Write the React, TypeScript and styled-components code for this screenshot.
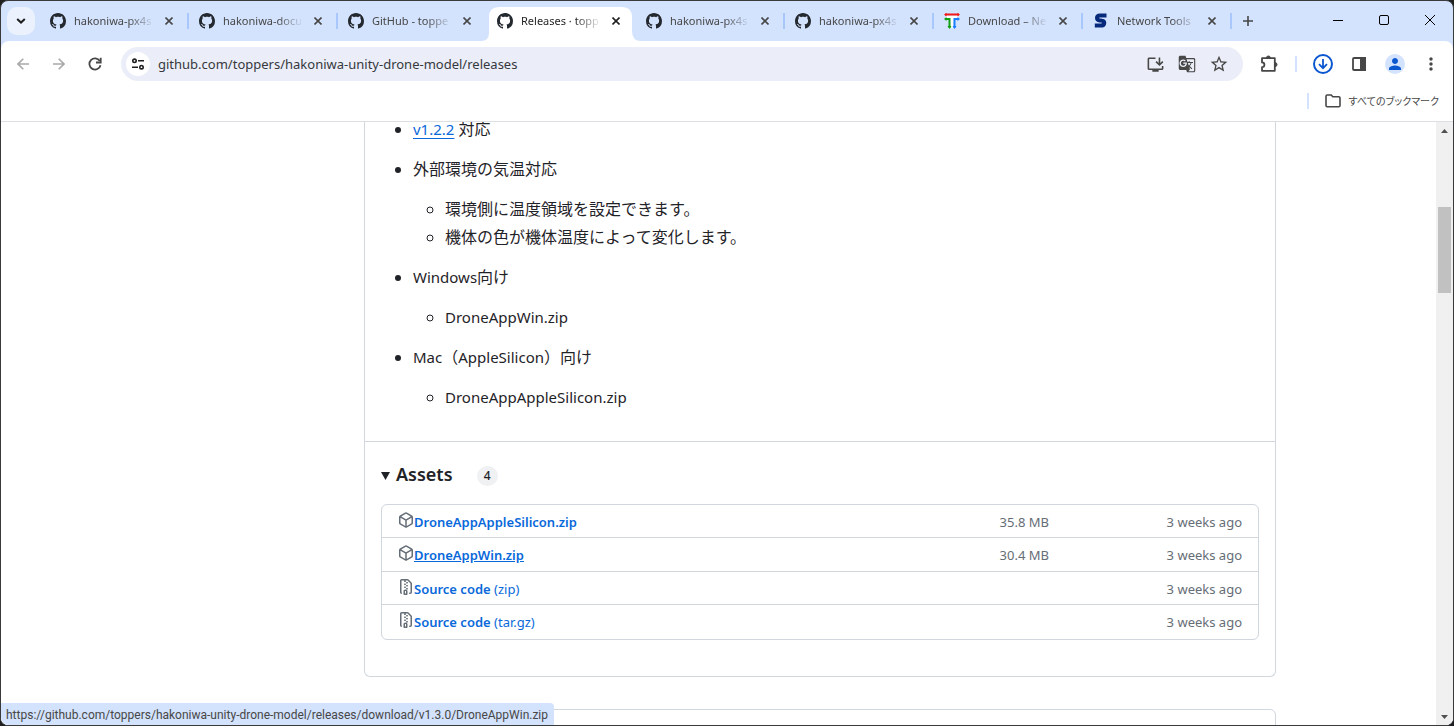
import React from "react";
import styled, { createGlobalStyle } from "styled-components";
import { MdInstallDesktop, MdGTranslate, MdStarBorder, MdMoreVert, MdPerson } from "react-icons/md";

const uiFont = `"Noto Sans", "Noto Sans CJK JP", sans-serif`;

const GlobalStyle = createGlobalStyle`
  * { box-sizing: border-box; }
  html, body, #root { height: 100%; }
  body { margin: 0; background: #1f1f1f; font-family: ${uiFont}; color: #1f2328; }
  ul { list-style: none; margin: 0; padding: 0; }
  button { border: 0; padding: 0; background: none; font: inherit; color: inherit; }
`;

const Window = styled.div`
  display: flex;
  flex-direction: column;
  height: 100vh;
  border: 1px solid #3a3a3c;
  border-radius: 8px;
  overflow: hidden;
  background: #d3e2fd;
`;

const TabStrip = styled.header`
  display: flex;
  height: 40px;
  padding-left: 6px;
`;

const TabSearch = styled.button`
  display: grid;
  place-items: center;
  width: 28px;
  height: 28px;
  margin: 6px 5px 0 0;
  border-radius: 10px;
  background: #ebf2fe;
`;

const Tabs = styled.nav`
  display: flex;
  flex: 0 1 1192px;
  min-width: 0;
`;

const TabSlot = styled.div<{ $active?: boolean; $divider?: boolean }>`
  position: relative;
  display: flex;
  align-items: center;
  flex: 1 1 0;
  min-width: 0;
  height: 34px;
  margin-top: 6px;
  padding: 0 0 6px 10px;
  color: ${(p) => (p.$active ? "#1f1f1f" : "#474747")};

  &::after {
    content: "";
    display: ${(p) => (p.$divider ? "block" : "none")};
    width: 2px;
    height: 16px;
    margin-left: auto;
    background: #a8c7fa;
  }
`;

const ActiveShape = styled.svg`
  position: absolute;
  left: -6px;
  top: 0;
`;

const TabIcon = styled.span`
  position: relative;
  display: flex;
  flex: none;
  width: 16px;
  height: 16px;
`;

const TabTitle = styled.span`
  position: relative;
  flex: 0 0 80px;
  margin-left: 8px;
  white-space: nowrap;
  font-size: 11px;
  line-height: 18px;
  mask-image: linear-gradient(to right, #000 68%, transparent);
`;

const TabClose = styled.button`
  position: relative;
  display: grid;
  place-items: center;
  flex: none;
  width: 16px;
  height: 16px;
  margin-left: 7px;
`;

const NewTab = styled.button`
  display: grid;
  place-items: center;
  width: 28px;
  height: 28px;
  margin: 6px 0 0 2px;
  color: #474747;
`;

const WindowControls = styled.div`
  display: flex;
  margin-left: auto;
`;

const WindowButton = styled.button`
  display: grid;
  place-items: center;
  width: 46px;
  height: 38px;
`;

const Chrome = styled.section`
  background: #fff;
  border-radius: 8px 8px 0 0;
  border-bottom: 1px solid #dcdee1;
`;

const Toolbar = styled.div`
  display: flex;
  align-items: center;
  height: 46px;
  padding: 0 4px;
  color: #474747;
`;

const ToolButton = styled.button<{ $muted?: boolean }>`
  display: grid;
  place-items: center;
  flex: none;
  width: 36px;
  height: 34px;
  color: ${(p) => (p.$muted ? "#a9a9a9" : "#474747")};
`;

const AddressBar = styled.div`
  display: flex;
  align-items: center;
  flex: 1;
  min-width: 0;
  height: 34px;
  margin: 0 8px;
  padding: 0 8px 0 5px;
  border-radius: 17px;
  background: #ebeef8;
`;

const SiteInfo = styled.button`
  display: grid;
  place-items: center;
  flex: none;
  width: 24px;
  height: 24px;
  border-radius: 50%;
  background: #fff;
  color: #1f1f1f;
`;

const AddressInput = styled.input`
  flex: 1;
  min-width: 0;
  margin-left: 8px;
  padding: 0;
  border: 0;
  outline: 0;
  background: none;
  font-family: ${uiFont};
  font-size: 13px;
  line-height: 20px;
  color: #36383d;
`;

const AddressAction = styled.button`
  display: grid;
  place-items: center;
  width: 32px;
  height: 32px;
  color: #474747;
`;

const Divider = styled.span`
  flex: none;
  width: 2px;
  height: 16px;
  margin: 0 8px;
  background: #d3e2fd;
`;

const Avatar = styled.span`
  display: grid;
  place-items: center;
  width: 20px;
  height: 20px;
  border-radius: 50%;
  background: #d3e2fd;
  color: #0b57d0;
`;

const BookmarkBar = styled.div`
  display: flex;
  align-items: center;
  justify-content: flex-end;
  height: 34px;
  padding: 0 14px 6px 0;
`;

const BookmarkButton = styled.button`
  display: flex;
  align-items: center;
  gap: 8px;
  margin-left: 8px;
  font-family: "Noto Sans CJK JP", sans-serif;
  font-size: 10px;
  line-height: 18px;
  color: #474747;
`;

const KanaLabel = styled.span`
  font-feature-settings: "palt";
`;

const Viewport = styled.div`
  display: flex;
  flex: 1;
  min-height: 0;
  background: #fff;
`;

const Page = styled.main`
  flex: 1;
  min-width: 0;
  padding-right: 1px;
  overflow: hidden;
`;

const Container = styled.div`
  max-width: 1116px;
  margin: 0 auto;
  padding-left: 204px;
`;

const Card = styled.article`
  border: 1px solid #d0d7de;
  border-top: 0;
  border-radius: 0 0 6px 6px;
`;

const NextCard = styled.article`
  height: 40px;
  margin-top: 32px;
  border: 1px solid #d0d7de;
  border-radius: 6px;
`;

const Notes = styled.div`
  margin-top: -5px;
  padding: 0 16px 32px;
  font-size: 16px;
  line-height: 24px;
`;

const NoteList = styled.ul`
  padding-left: 32px;
  list-style: disc;

  > li + li { margin-top: 16px; }
`;

const SubList = styled.ul`
  margin-top: 16px;
  padding-left: 32px;
  list-style: circle;

  > li + li { margin-top: 4px; }
`;

const Latin = styled.span`
  font-size: 15px;
`;

const VersionLink = styled.a`
  font-size: 15px;
  color: #0969da;
  text-decoration: underline;
  text-underline-offset: 3px;
`;

const Assets = styled.section`
  padding: 16px 16px 36px;
  border-top: 1px solid #d0d7de;
`;

const AssetsHeader = styled.h3`
  display: flex;
  align-items: center;
  height: 32px;
  margin: 0 0 14px;
  font-size: 18px;
  font-weight: 600;
  line-height: 30px;
`;

const Caret = styled.svg`
  margin: 4px 6px 0 0;
`;

const Counter = styled.span`
  min-width: 21px;
  margin: 4px 0 0 24px;
  border-radius: 20px;
  background: #eff1f3;
  font-size: 12px;
  font-weight: 500;
  line-height: 20px;
  text-align: center;
`;

const AssetList = styled.ul`
  display: grid;
  grid-auto-rows: 1fr;
  min-height: 136px;
  padding-bottom: 1px;
  border: 1px solid #d0d7de;
  border-radius: 6px;
`;

const AssetRow = styled.li`
  display: flex;
  align-items: center;
  padding: 2px 16px 0;
  font-size: 13px;
  line-height: 20px;
  color: #656d76;

  &:not(:last-child) { border-bottom: 1px solid #d0d7de; }
`;

const AssetLink = styled.a<{ $hovered?: boolean }>`
  flex: 1;
  color: #0969da;
  text-decoration: none;

  span { text-decoration: ${(p) => (p.$hovered ? "underline" : "none")}; }
`;

const AssetName = styled.span`
  font-weight: 600;
`;

const AssetSize = styled.span`
  width: 56px;
  text-align: right;
`;

const AssetDate = styled.span`
  width: 193px;
  text-align: right;
`;

const Scrollbar = styled.div`
  display: flex;
  flex-direction: column;
  align-items: center;
  width: 17px;
  padding: 7px 0 6px;
  background: #f0f0f0;
`;

const ScrollThumb = styled.div`
  width: 13px;
  height: 86px;
  margin: 74px 0 auto;
  background: #c1c1c1;
`;

const StatusBubble = styled.div`
  position: fixed;
  left: 1px;
  bottom: 1px;
  padding: 2px 6px 0 5px;
  border-radius: 0 4px 0 8px;
  background: #d3e2fd;
  font-family: Roboto, sans-serif;
  font-size: 12px;
  line-height: 20px;
  color: #474747;
`;

const GitHubMark = () => (
  <svg width="16" height="16" viewBox="0 0 16 16" fill="#24292f">
    <path d="M8 0c4.42 0 8 3.58 8 8a8.013 8.013 0 0 1-5.45 7.59c-.4.08-.55-.17-.55-.38 0-.27.01-1.13.01-2.2 0-.75-.25-1.23-.54-1.48 1.78-.2 3.65-.88 3.65-3.95 0-.88-.31-1.59-.82-2.15.08-.2.36-1.02-.08-2.12 0 0-.67-.22-2.2.82-.64-.18-1.32-.27-2-.27-.68 0-1.36.09-2 .27-1.53-1.03-2.2-.82-2.2-.82-.44 1.1-.16 1.92-.08 2.12-.51.56-.82 1.28-.82 2.15 0 3.06 1.86 3.75 3.64 3.95-.23.2-.44.55-.51 1.07-.46.21-1.61.55-2.33-.66-.15-.24-.6-.83-1.23-.82-.67.01-.27.38.01.53.34.19.73.9.82 1.13.16.45.68 1.31 2.69.94 0 .67.01 1.3.01 1.49 0 .21-.15.45-.55.38A7.995 7.995 0 0 1 0 8c0-4.42 3.58-8 8-8Z" />
  </svg>
);

const NetToolMark = () => (
  <svg width="16" height="16" viewBox="0 0 16 16" fill="none" strokeWidth="2">
    <path d="M2 4h12M8 4v11" stroke="#fff" strokeWidth="3" />
    <path d="M1 1.5h14" stroke="#f01818" />
    <path d="M0 1.500L2.500 0v3.500zM16 1.500L13.500 0v3.500z" fill="#f01818" />
    <path d="M2 6h3.500v9" stroke="#12a012" />
    <path d="M0 6l2.500-2v4zM5.500 16L3.500 13h4z" fill="#12a012" />
    <path d="M14 6h-3.500v9" stroke="#1a80ff" />
    <path d="M16 6l-2.500-2v4zM10.500 16l-2-3h4z" fill="#1a80ff" />
  </svg>
);

const SMark = () => (
  <svg width="16" height="16" viewBox="0 0 16 16" fill="none" stroke="#06297c" strokeWidth="4">
    <path d="M13.500 2.500H7C4.600 2.500 4 3.500 4 5S5 7.200 6.800 7.400L9 7.800C11 8 11.500 9 11.200 10.500S10 12.500 8 12.500H1.800" />
  </svg>
);

const CloseIcon = () => (
  <svg width="8" height="8" viewBox="0 0 8 8" stroke="currentColor" strokeWidth="1.6">
    <path d="M.5.5l7 7M7.500.5l-7 7" />
  </svg>
);

const ExtensionIcon = () => (
  <svg width="18" height="18" viewBox="0 0 18 18" fill="none" stroke="currentColor" strokeWidth="1.800" strokeLinejoin="round">
    <path d="M2 3.200h12.800v12.600H2v-3.600a2.400 2.400 0 0 0 0-4.800Z" />
    <path d="M6.400 3a2 2 0 0 1 4 0ZM15 7.600a2 2 0 0 1 0 4Z" fill="currentColor" strokeWidth="1" />
  </svg>
);

const PackageIcon = () => (
  <svg width="16" height="16" viewBox="0 0 16 16" fill="#656d76">
    <path d="m8.878.392 5.250 3.045c.54.314.872.89.872 1.514v6.098a1.750 1.750 0 0 1-.872 1.514l-5.250 3.045a1.750 1.750 0 0 1-1.756 0l-5.250-3.045A1.750 1.750 0 0 1 1 11.049V4.951c0-.624.332-1.201.872-1.514L7.122.392a1.750 1.750 0 0 1 1.756 0ZM7.875 1.690l-4.630 2.685L8 7.133l4.755-2.758-4.630-2.685a.248.248 0 0 0-.25 0ZM2.500 5.677v5.372c0 .09.047.171.125.216l4.625 2.683V8.432Zm6.250 8.271 4.625-2.683a.25.25 0 0 0 .125-.216V5.677L8.750 8.432Z" />
  </svg>
);

const FileZipIcon = () => (
  <svg width="16" height="16" viewBox="0 0 16 16" fill="#656d76">
    <path d="M3.500 1.750v11.500c0 .09.048.173.126.217a.75.75 0 0 1-.752 1.298A1.748 1.748 0 0 1 2 13.250V1.750C2 .784 2.784 0 3.750 0h5.586c.464 0 .909.185 1.237.513l2.914 2.914c.329.328.513.773.513 1.237v8.586A1.750 1.750 0 0 1 12.250 15h-.5a.75.75 0 0 1 0-1.500h.5a.25.25 0 0 0 .25-.25V4.664a.25.25 0 0 0-.073-.177L9.513 1.573a.25.25 0 0 0-.177-.073H7.250a.75.75 0 0 1 0 1.500h-.5a.75.75 0 0 1 0-1.500h-3a.25.25 0 0 0-.25.25Zm3.750 8.750h.5c.966 0 1.750.784 1.750 1.750v3a.75.75 0 0 1-.75.75h-2.500a.75.75 0 0 1-.75-.75v-3c0-.966.784-1.750 1.750-1.750ZM6 5.250a.75.75 0 0 1 .75-.75h.5a.75.75 0 0 1 0 1.500h-.5A.75.75 0 0 1 6 5.250Zm.75 2.250h.5a.75.75 0 0 1 0 1.500h-.5a.75.75 0 0 1 0-1.500ZM8 6.750A.75.75 0 0 1 8.750 6h.5a.75.75 0 0 1 0 1.500h-.5A.75.75 0 0 1 8 6.750ZM8.750 3h.5a.75.75 0 0 1 0 1.500h-.5a.75.75 0 0 1 0-1.500ZM8 9.750A.75.75 0 0 1 8.750 9h.5a.75.75 0 0 1 0 1.500h-.5A.75.75 0 0 1 8 9.750Zm-1 2.500v2.250h1v-2.250a.25.25 0 0 0-.25-.25h-.5a.25.25 0 0 0-.25.25Z" />
  </svg>
);

const AssetIcon = styled.span`
  display: flex;
  width: 16px;
  height: 20px;
`;

type Tab = { title: string; icon: React.ReactNode; active?: boolean; divider?: boolean };

const tabs: Tab[] = [
  { title: "hakoniwa-px4s", icon: <GitHubMark />, divider: true },
  { title: "hakoniwa-docu", icon: <GitHubMark />, divider: true },
  { title: "GitHub - toppe", icon: <GitHubMark /> },
  { title: "Releases · topp", icon: <GitHubMark />, active: true },
  { title: "hakoniwa-px4s", icon: <GitHubMark />, divider: true },
  { title: "hakoniwa-px4s", icon: <GitHubMark />, divider: true },
  { title: "Download – Ne", icon: <NetToolMark />, divider: true },
  { title: "Network Tools", icon: <SMark />, divider: true },
];

const assets = [
  { name: "DroneAppAppleSilicon.zip", size: "35.8 MB" },
  { name: "DroneAppWin.zip", size: "30.4 MB", hovered: true },
  { name: "Source code", kind: "(zip)" },
  { name: "Source code", kind: "(tar.gz)" },
];

export default function App() {
  return (
    <>
      <GlobalStyle />
      <Window>
        <TabStrip>
          <TabSearch aria-label="Search tabs">
            <svg width="10" height="6" viewBox="0 0 10 6" fill="none" stroke="#1f1f1f" strokeWidth="2">
              <path d="M1.200 1 5 4.600 8.800 1" />
            </svg>
          </TabSearch>
          <Tabs>
            {tabs.map((tab, i) => (
              <TabSlot key={i} $active={tab.active} $divider={tab.divider}>
                {tab.active && (
                  <ActiveShape width="160" height="34" viewBox="0 0 160 34" fill="#fff">
                    <path d="M0 34Q8 34 8 26V10Q8 0 18 0H141Q151 0 151 10V24Q151 34 160 34Z" />
                  </ActiveShape>
                )}
                <TabIcon>{tab.icon}</TabIcon>
                <TabTitle>{tab.title}</TabTitle>
                <TabClose aria-label="Close tab"><CloseIcon /></TabClose>
              </TabSlot>
            ))}
          </Tabs>
          <NewTab aria-label="New tab">
            <svg width="10" height="10" viewBox="0 0 10 10" stroke="currentColor" strokeWidth="1.6">
              <path d="M5 0v10M0 5h10" />
            </svg>
          </NewTab>
          <WindowControls>
            <WindowButton aria-label="Minimize">
              <svg width="10" height="10" stroke="#000"><path d="M0 5.500h10" /></svg>
            </WindowButton>
            <WindowButton aria-label="Maximize">
              <svg width="10" height="10" fill="none" stroke="#000"><rect x=".5" y=".5" width="9" height="9" rx="1.500" /></svg>
            </WindowButton>
            <WindowButton aria-label="Close">
              <svg width="10" height="10" stroke="#000"><path d="M0 0l10 10M10 0L0 10" /></svg>
            </WindowButton>
          </WindowControls>
        </TabStrip>

        <Chrome>
          <Toolbar>
            <ToolButton $muted aria-label="Back">
              <svg width="12" height="12" viewBox="0 0 12 12" fill="none" stroke="currentColor" strokeWidth="1.600">
                <path d="M12 6H1M6.300.7 1 6l5.300 5.300" />
              </svg>
            </ToolButton>
            <ToolButton $muted aria-label="Forward">
              <svg width="12" height="12" viewBox="0 0 12 12" fill="none" stroke="currentColor" strokeWidth="1.600">
                <path d="M0 6h11M5.700.7 11 6l-5.300 5.300" />
              </svg>
            </ToolButton>
            <ToolButton aria-label="Reload">
              <svg width="14" height="14" viewBox="0 0 14 14" fill="none" stroke="currentColor" strokeWidth="1.800">
                <path d="M12.500 8.200A5.600 5.600 0 1 1 11.800 4" />
                <path d="M12.700.8v4.700H8" />
              </svg>
            </ToolButton>
            <AddressBar>
              <SiteInfo aria-label="Site information">
                <svg width="12" height="12" viewBox="0 0 12 12" fill="none" stroke="currentColor" strokeWidth="1.600">
                  <circle cx="2.500" cy="2.800" r="1.700" />
                  <path d="M6 2.800h6M0 9.200h6" />
                  <circle cx="9.500" cy="9.200" r="1.700" />
                </svg>
              </SiteInfo>
              <AddressInput aria-label="Address" defaultValue="github.com/toppers/hakoniwa-unity-drone-model/releases" />
              <AddressAction aria-label="Install app"><MdInstallDesktop size={19} /></AddressAction>
              <AddressAction aria-label="Translate"><MdGTranslate size={18} /></AddressAction>
              <AddressAction aria-label="Bookmark"><MdStarBorder size={20} /></AddressAction>
            </AddressBar>
            <ToolButton aria-label="Extensions"><ExtensionIcon /></ToolButton>
            <Divider />
            <ToolButton aria-label="Downloads">
              <svg width="20" height="20" viewBox="0 0 20 20" fill="none" stroke="#0b57d0">
                <circle cx="10" cy="10" r="9" strokeWidth="2" />
                <path d="M10 5v9M6 10.200l4 4 4-4" strokeWidth="1.800" />
              </svg>
            </ToolButton>
            <ToolButton aria-label="Side panel">
              <svg width="14" height="14" viewBox="0 0 14 14">
                <rect x="1" y="1" width="12" height="12" rx="1" fill="none" stroke="currentColor" strokeWidth="1.800" />
                <path d="M8 0h6v14H8z" fill="currentColor" />
              </svg>
            </ToolButton>
            <ToolButton aria-label="Profile"><Avatar><MdPerson size={18} /></Avatar></ToolButton>
            <ToolButton aria-label="Menu"><MdMoreVert size={20} /></ToolButton>
          </Toolbar>
          <BookmarkBar>
            <Divider />
            <BookmarkButton>
              <svg width="16" height="14" viewBox="0 0 16 14" fill="none" stroke="#474747" strokeWidth="1.600">
                <path d="M1 2.300Q1 1 2.200 1h4l1.600 1.800h6Q15 2.800 15 4v7.500Q15 12.800 13.800 12.800H2.200Q1 12.800 1 11.500Z" />
              </svg>
              <KanaLabel>すべてのブックマーク</KanaLabel>
            </BookmarkButton>
          </BookmarkBar>
        </Chrome>

        <Viewport>
          <Page>
            <Container>
              <Card>
                <Notes>
                  <NoteList>
                    <li><VersionLink href="#v1.2.2">v1.2.2</VersionLink> 対応</li>
                    <li>
                      外部環境の気温対応
                      <SubList>
                        <li>環境側に温度領域を設定できます。</li>
                        <li>機体の色が機体温度によって変化します。</li>
                      </SubList>
                    </li>
                    <li>
                      <Latin>Windows</Latin>向け
                      <SubList><li><Latin>DroneAppWin.zip</Latin></li></SubList>
                    </li>
                    <li>
                      <Latin>Mac</Latin>（<Latin>AppleSilicon</Latin>）向け
                      <SubList><li><Latin>DroneAppAppleSilicon.zip</Latin></li></SubList>
                    </li>
                  </NoteList>
                </Notes>
                <Assets>
                  <AssetsHeader>
                    <Caret width="9" height="8" viewBox="0 0 9 8" fill="#1f2328"><path d="M0 0h9L4.500 8z" /></Caret>
                    Assets
                    <Counter>4</Counter>
                  </AssetsHeader>
                  <AssetList>
                    {assets.map((asset, i) => (
                      <AssetRow key={i}>
                        <AssetIcon>{asset.kind ? <FileZipIcon /> : <PackageIcon />}</AssetIcon>
                        <AssetLink href="#asset" $hovered={asset.hovered}>
                          <AssetName>{asset.name}</AssetName> {asset.kind}
                        </AssetLink>
                        <AssetSize>{asset.size}</AssetSize>
                        <AssetDate>3 weeks ago</AssetDate>
                      </AssetRow>
                    ))}
                  </AssetList>
                </Assets>
              </Card>
              <NextCard />
            </Container>
          </Page>
          <Scrollbar>
            <svg width="7" height="4" viewBox="0 0 7 4" fill="#505050"><path d="M0 4h7L3.500 0z" /></svg>
            <ScrollThumb />
            <svg width="7" height="4" viewBox="0 0 7 4" fill="#505050"><path d="M0 0h7L3.500 4z" /></svg>
          </Scrollbar>
        </Viewport>
        <StatusBubble>https://github.com/toppers/hakoniwa-unity-drone-model/releases/download/v1.3.0/DroneAppWin.zip</StatusBubble>
      </Window>
    </>
  );
}
